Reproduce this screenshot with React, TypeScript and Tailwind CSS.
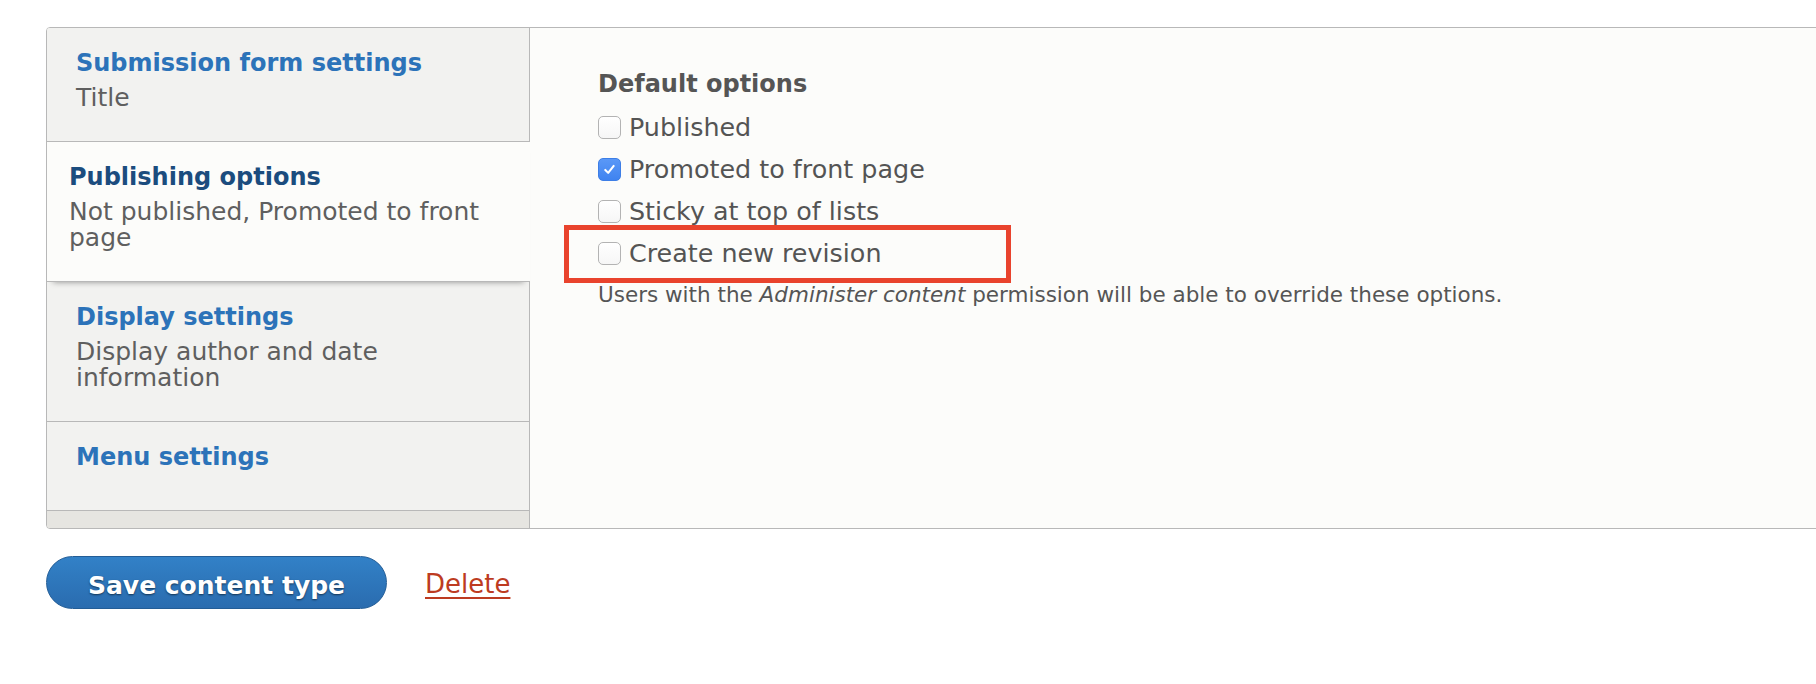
import React from "react";

type Tab = {
  title: string;
  summary?: string;
  active?: boolean;
};

const tabs: Tab[] = [
  { title: "Submission form settings", summary: "Title" },
  { title: "Publishing options", summary: "Not published, Promoted to front page", active: true },
  { title: "Display settings", summary: "Display author and date information" },
  { title: "Menu settings" },
];

const options = [
  { label: "Published", checked: false },
  { label: "Promoted to front page", checked: true },
  { label: "Sticky at top of lists", checked: false },
  { label: "Create new revision", checked: false, highlight: true },
];

function Checkbox({ checked }: { checked: boolean }) {
  if (checked) {
    return (
      <span className="flex h-[23px] w-[23px] shrink-0 items-center justify-center rounded-[5px] border border-[#3d7ee6] bg-gradient-to-b from-[#5a98f7] to-[#3f83f0]">
        <svg width="15" height="15" viewBox="0 0 16 16" fill="none">
          <path d="M3.5 8.5 L6.6 11.6 L12.5 4.2" stroke="white" strokeWidth="2.2" strokeLinecap="round" strokeLinejoin="round" />
        </svg>
      </span>
    );
  }
  return (
    <span className="block h-[23px] w-[23px] shrink-0 rounded-[5px] border border-[#b3b3b3] bg-gradient-to-b from-white to-[#f6f6f6] shadow-[inset_0_1px_0_rgba(255,255,255,0.9)]" />
  );
}

function MenuTab({ tab }: { tab: Tab }) {
  const base = tab.active
    ? "relative z-10 mr-[-1px] bg-[#fcfcfa] pl-[22px] shadow-[0_6px_6px_-6px_rgba(0,0,0,0.4)]"
    : "bg-[#f2f2f0] pl-[29px]";
  const pad = tab.summary ? "pb-[29px]" : "pb-[40px]";
  return (
    <div className={`${base} ${pad} border-b border-[#b8b8b8] pt-[22px] pr-[20px]`}>
      <div
        className={`text-[24px] font-bold leading-[26px] ${
          tab.active ? "text-[#1b4c7e]" : "text-[#2c73b9]"
        }`}
      >
        {tab.title}
      </div>
      {tab.summary && (
        <div className="mt-[9px] text-[25px] leading-[26.5px] text-[#5f5f5f]">{tab.summary}</div>
      )}
    </div>
  );
}

export default function App() {
  return (
    <div className="h-[684px] w-full overflow-hidden bg-white pl-[46px] pt-[27px] font-['DejaVu_Sans',sans-serif]">
      {/* vertical tabs */}
      <div className="flex h-[502px] w-[1820px] overflow-hidden rounded-[4px] border border-[#b8b8b8] bg-[#fcfcfa]">
        <div className="flex w-[483px] shrink-0 flex-col border-r border-[#b8b8b8] bg-[#e6e5e1]">
          {tabs.map((t) => (
            <MenuTab key={t.title} tab={t} />
          ))}
        </div>

        <div className="flex-1 bg-[#fcfcfa] pl-[68px] pt-[43px]">
          <div className="text-[24px] font-bold leading-[26px] text-[#555555]">Default options</div>
          <div className="mt-[17px] flex flex-col gap-[16px]">
            {options.map((o) => (
              <div key={o.label} className="relative flex h-[26px] items-center gap-[8px]">
                <Checkbox checked={o.checked} />
                <span className="text-[25.4px] leading-[26px] text-[#545454]">{o.label}</span>
                {o.highlight && (
                  <span className="pointer-events-none absolute -left-[34px] -top-[15px] h-[58px] w-[447px] border-[5px] border-[#e9432d]" />
                )}
              </div>
            ))}
          </div>
          <p className="mt-[17px] text-[21.5px] leading-[24px] text-[#555555]">
            Users with the <em>Administer content</em> permission will be able to override these options.
          </p>
        </div>
      </div>

      {/* form actions */}
      <div className="mt-[27px] flex items-start">
        <button className="flex h-[53px] w-[341px] items-center justify-center rounded-full border border-[#235d96] bg-gradient-to-b from-[#3281c7] to-[#2a6caf] pt-[6px] text-[25px] font-bold leading-[26px] text-white [text-shadow:0_1px_2px_rgba(0,0,0,0.55)]">
          Save content type
        </button>
        <a
          href="#"
          className="ml-[38px] mt-[15px] text-[26px] leading-[26px] text-[#bd3b21] underline decoration-[1.5px] underline-offset-[4px]"
        >
          Delete
        </a>
      </div>
    </div>
  );
}
